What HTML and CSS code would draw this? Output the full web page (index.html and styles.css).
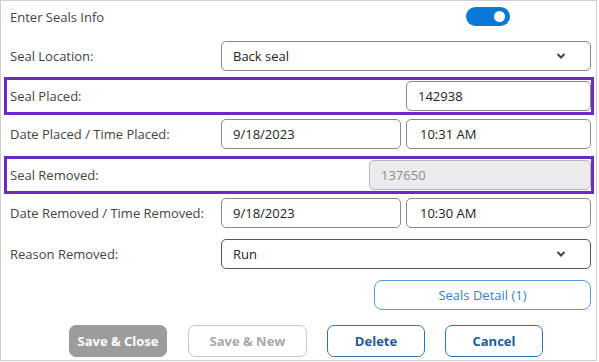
FILE: index.html
```html
<!DOCTYPE html>
<html lang="en">
<head>
    <meta charset="UTF-8">
    <title>Seals Info</title>
    <link rel="stylesheet" href="styles.css">
</head>
<body>
    <div class="dialog">
        <div class="row top-row">
            <div class="label">Enter Seals Info</div>
            <div class="toggle"><div class="knob"></div></div>
        </div>

        <div class="row">
            <div class="label">Seal Location:</div>
            <div class="select wide">
                <span>Back seal</span>
                <svg class="chevron" width="10" height="6" viewBox="0 0 10 6"><path d="M1.5 1 L5 4.5 L8.5 1" fill="none" stroke="#444" stroke-width="2"/></svg>
            </div>
        </div>

        <div class="row highlight">
            <div class="label">Seal Placed:</div>
            <div class="input placed">142938</div>
        </div>

        <div class="row">
            <div class="label">Date Placed / Time Placed:</div>
            <div class="pair">
                <div class="input date">9/18/2023</div>
                <div class="input time">10:31 AM</div>
            </div>
        </div>

        <div class="row highlight second">
            <div class="label">Seal Removed:</div>
            <div class="input removed">137650</div>
        </div>

        <div class="row">
            <div class="label">Date Removed / Time Removed:</div>
            <div class="pair">
                <div class="input date">9/18/2023</div>
                <div class="input time">10:30 AM</div>
            </div>
        </div>

        <div class="row reason">
            <div class="label">Reason Removed:</div>
            <div class="select wide dark">
                <span>Run</span>
                <svg class="chevron" width="10" height="6" viewBox="0 0 10 6"><path d="M1.5 1 L5 4.5 L8.5 1" fill="none" stroke="#444" stroke-width="2"/></svg>
            </div>
        </div>

        <div class="detail-row">
            <button class="detail-btn">Seals Detail (1)</button>
        </div>

        <div class="actions">
            <button class="btn btn-primary">Save &amp; Close</button>
            <button class="btn btn-disabled">Save &amp; New</button>
            <button class="btn btn-outline">Delete</button>
            <button class="btn btn-outline">Cancel</button>
        </div>
    </div>
</body>
</html>
```

FILE: styles.css
```css
* {
    box-sizing: border-box;
}
body {
    margin: 0;
    background: #fff;
    font-family: "Open Sans", "Noto Sans", sans-serif;
    font-size: 13px;
    color: #444;
}
.dialog {
    width: 597px;
    height: 361px;
    border: 1px solid #cfcfcf;
    background: #fff;
}
.row {
    display: flex;
    align-items: center;
    height: 38px;
    padding: 0 5px 0 9px;
}
.label {
    flex: 1;
    white-space: nowrap;
}
.top-row {
    height: 31px;
    margin-bottom: 8px;
    padding-right: 86px;
}
.top-row + .row {
    height: 32px;
}
.toggle {
    width: 44px;
    height: 19px;
    border-radius: 10px;
    background: #0a78d7;
    display: flex;
    align-items: center;
    justify-content: flex-end;
    padding-right: 5px;
}
.knob {
    width: 11px;
    height: 11px;
    border-radius: 50%;
    background: #fff;
}
.highlight {
    margin: 5px 2px 0 3px;
    padding: 0 0 0 3px;
    border: 3px solid #6a2cc4;
}
.highlight.second {
    margin-top: 3px;
}
.input, .select {
    height: 30px;
    border: 1px solid #8a8a8a;
    border-radius: 5px;
    display: flex;
    align-items: center;
    padding-left: 11px;
    color: #222;
    background: #fff;
}
.select {
    justify-content: space-between;
    padding-right: 24px;
}
.select.dark {
    border-color: #555;
}
.wide {
    width: 370px;
}
.placed {
    width: 185px;
}
.removed {
    width: 222px;
    background: #ececec;
    border-color: #b5b5b5;
    color: #8a8a8a;
}
.pair {
    display: flex;
    gap: 5px;
}
.date {
    width: 180px;
}
.time {
    width: 185px;
    padding-left: 13px;
}
.reason {
    height: 36px;
    margin-top: 4px;
}
.detail-row {
    display: flex;
    justify-content: flex-end;
    padding-right: 5px;
    margin-top: 8px;
}
button {
    font-family: inherit;
    font-size: 13px;
    cursor: pointer;
}
.detail-btn {
    width: 217px;
    height: 30px;
    border: 1px solid #5b9bd5;
    border-radius: 8px;
    background: #fff;
    color: #3b7fc0;
}
.actions {
    display: flex;
    gap: 20px;
    margin: 15px 0 0 68px;
}
.btn {
    height: 32px;
    width: 98px;
    border-radius: 7px;
    font-weight: bold;
    background: #fff;
}
.btn-primary {
    background: #9c9c9c;
    border: 1px solid #9c9c9c;
    color: #fff;
}
.btn-disabled {
    width: 119px;
    margin-left: 1px;
    border: 1px solid #c8c8c8;
    color: #a8a8a8;
}
.btn-outline {
    border: 1px solid #2f74b5;
    color: #1f5a94;
}
```
